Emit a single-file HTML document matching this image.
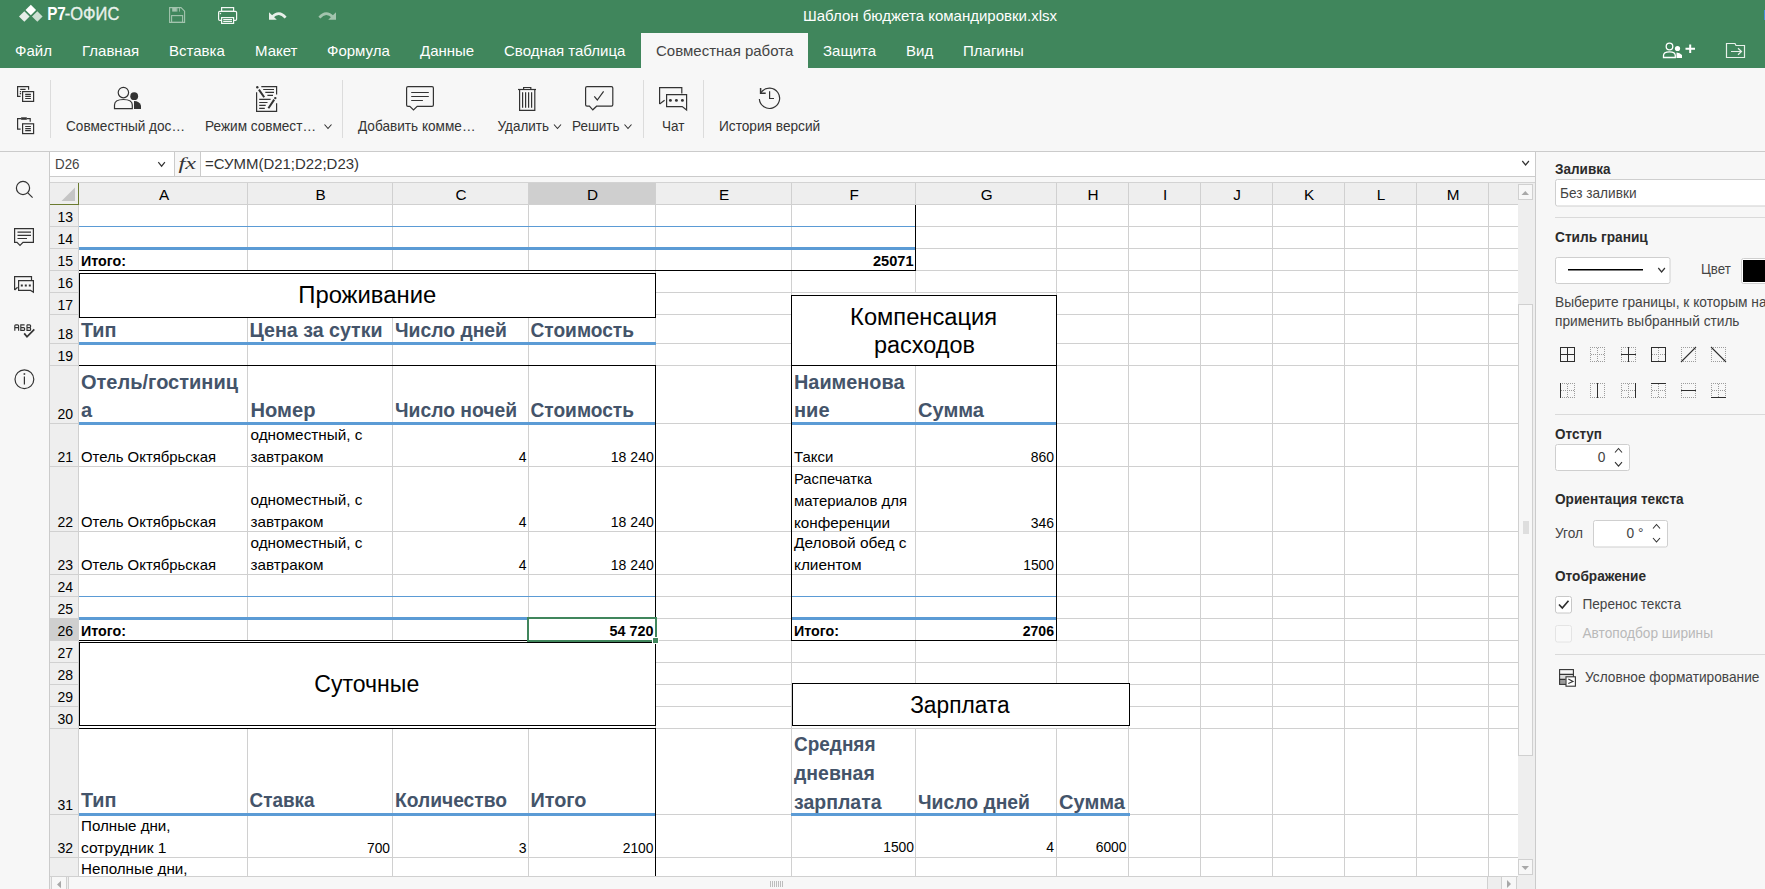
<!DOCTYPE html>
<html><head><meta charset="utf-8"><title>Р7-Офис</title>
<style>
html,body{margin:0;padding:0;width:1765px;height:889px;overflow:hidden;background:#f7f7f7;}
svg{display:block;position:absolute;left:0;top:0;}
text{white-space:pre;}
</style></head>
<body>
<svg width="1765" height="889" viewBox="0 0 1765 889" shape-rendering="auto">
<rect x="0" y="0" width="1765" height="889" fill="#f7f7f7" />
<rect x="0" y="0" width="1765" height="68" fill="#40865c" />
<rect x="1764" y="10" width="1" height="10" fill="#4a8fd8" />
<path d="M30.8 4.7 L36.1 10.0 L30.8 15.3 L25.5 10.0 Z" fill="#ffffff"/>
<path d="M24.3 11.2 L29.6 16.5 L24.3 21.8 L19.0 16.5 Z" fill="#e6eee8"/>
<path d="M37.3 11.2 L42.599999999999994 16.5 L37.3 21.8 L31.999999999999996 16.5 Z" fill="#cddfd3"/>
<text x="47.2" y="20" font-family="Liberation Sans" font-size="17.5" font-weight="700" fill="#ffffff" textLength="18.6" lengthAdjust="spacingAndGlyphs" >Р7</text>
<text x="64.8" y="20" font-family="Liberation Sans" font-size="17.5" fill="#e9f1eb" textLength="54.5" lengthAdjust="spacingAndGlyphs" stroke="#e9f1eb" stroke-width="0.35">-ОФИС</text>
<g fill="none" stroke="#a3c4ae" stroke-width="1.1"><path d="M169.6 7.6 H181 L184.6 11.2 V22.4 H169.6 Z"/><rect x="171.6" y="15.6" width="11" height="6.8"/></g>
<rect x="172.2" y="8" width="4.6" height="3.6" fill="#a3c4ae" />
<rect x="176.8" y="8" width="0.6" height="3.6" fill="#a3c4ae" />
<rect x="179" y="8" width="0.8" height="3.6" fill="#a3c4ae" />
<g fill="none" stroke="#f4f8f5" stroke-width="1.2"><rect x="221.6" y="7.6" width="12" height="3.8"/><path d="M221.6 20.4 H219.8 Q218.6 20.4 218.6 19.2 V12.6 Q218.6 11.4 219.8 11.4 H235.4 Q236.6 11.4 236.6 12.6 V19.2 Q236.6 20.4 235.4 20.4 H233.6"/><rect x="221.6" y="17.6" width="12" height="5.8"/><path d="M223.2 19.6 H232 M223.2 21.5 H232"/></g>
<rect x="219.8" y="12.9" width="1.3" height="1.3" fill="#f4f8f5" />
<path d="M269 12.3 L269 19.8 L276.8 19.8 Z" fill="#e8f0ea"/><path d="M272 17.2 Q279 9.8 285.6 17.6" fill="none" stroke="#e8f0ea" stroke-width="2.6"/>
<path d="M336 12.3 L336 19.8 L328.2 19.8 Z" fill="#a3c4ae"/><path d="M333 17.2 Q326 9.8 319.4 17.6" fill="none" stroke="#a3c4ae" stroke-width="2.6"/>
<text x="803" y="21" font-family="Liberation Sans" font-size="15" fill="#ffffff" textLength="254" lengthAdjust="spacingAndGlyphs" >Шаблон бюджета командировки.xlsx</text>
<rect x="641" y="33" width="167" height="35" fill="#f7f7f7" />
<text x="15" y="56" font-family="Liberation Sans" font-size="15" fill="#ffffff" >Файл</text>
<text x="82" y="56" font-family="Liberation Sans" font-size="15" fill="#ffffff" >Главная</text>
<text x="169" y="56" font-family="Liberation Sans" font-size="15" fill="#ffffff" >Вставка</text>
<text x="255" y="56" font-family="Liberation Sans" font-size="15" fill="#ffffff" >Макет</text>
<text x="327" y="56" font-family="Liberation Sans" font-size="15" fill="#ffffff" >Формула</text>
<text x="420" y="56" font-family="Liberation Sans" font-size="15" fill="#ffffff" >Данные</text>
<text x="504" y="56" font-family="Liberation Sans" font-size="15" fill="#ffffff" >Сводная таблица</text>
<text x="656" y="56" font-family="Liberation Sans" font-size="15" fill="#444444" >Совместная работа</text>
<text x="823" y="56" font-family="Liberation Sans" font-size="15" fill="#ffffff" >Защита</text>
<text x="906" y="56" font-family="Liberation Sans" font-size="15" fill="#ffffff" >Вид</text>
<text x="963" y="56" font-family="Liberation Sans" font-size="15" fill="#ffffff" >Плагины</text>
<g fill="none" stroke="#ffffff" stroke-width="1.3"><circle cx="1669.5" cy="46.5" r="3.3"/><path d="M1663.5 57.5 V55.5 Q1663.5 51.8 1669.5 51.8 Q1675.3 51.8 1675.3 55.5 V57.5 Z"/></g>
<circle cx="1677.5" cy="48.5" r="2.6" fill="#ffffff"/><path d="M1676.5 58 V52.5 Q1680 52.5 1682 55 V58 Z" fill="#ffffff"/><path d="M1685.5 48.7 H1695 M1690.2 44.5 V53" stroke="#ffffff" stroke-width="2"/>
<g fill="none" stroke="#e8f0ea" stroke-width="1.2"><path d="M1726.5 43.5 H1735 L1736 45.5 H1744.5 V57.5 H1726.5 Z"/><path d="M1731 51.5 H1741.5 M1738 48.2 L1741.5 51.5 L1738 54.8"/></g>
<rect x="0" y="151" width="1765" height="1" fill="#cbcbcb" />
<rect x="50" y="80" width="1" height="58" fill="#dcdcdc" />
<rect x="342" y="80" width="1" height="58" fill="#dcdcdc" />
<rect x="643" y="80" width="1" height="58" fill="#dcdcdc" />
<rect x="703" y="80" width="1" height="58" fill="#dcdcdc" />
<g fill="none" stroke="#333333" stroke-width="1.2"><path d="M28.6 89.8 V86.6 H17.6 V96.4 H20.6"/><path d="M20.2 89.4 H25.6"/><rect x="22.6" y="91.6" width="11" height="9.8"/><path d="M25.2 94.3 H30.9 M25.2 96.4 H30.9 M25.2 98.5 H30.9"/><path d="M26.8 118.6 H30.2 V121.8 M21 118.6 H17.6 V129.2 H20.6"/><rect x="22.6" y="123.8" width="11" height="9.8"/><path d="M25.2 126.5 H30.9 M25.2 128.6 H30.9 M25.2 130.6 H30.9"/></g>
<rect x="19.8" y="91" width="1.3" height="1.3" fill="#333333" />
<rect x="19.8" y="93" width="1.3" height="1.3" fill="#333333" />
<rect x="21.1" y="117.3" width="5.7" height="2.5" fill="#333333" />
<g fill="none" stroke="#333333" stroke-width="1.2"><circle cx="123.4" cy="92.6" r="5.2"/><path d="M114.5 108.6 V105 Q114.5 99.5 123.4 99.5 Q132.3 99.5 132.3 105 V108.6 Z"/></g><circle cx="134.2" cy="96.2" r="3.9" fill="#333333"/><path d="M134 109 V100.9 Q139.5 100.9 141 105.5 V109 Z" fill="#333333"/>
<text x="66" y="131" font-family="Liberation Sans" font-size="13.75" fill="#333333" textLength="119" lengthAdjust="spacingAndGlyphs" >Совместный дос…</text>
<g fill="none" stroke="#333333" stroke-width="1.2"><path d="M261.3 86.6 H276.6 V94.4 M276.6 103.2 V111.4 H256.6 V92.3"/><path d="M263.2 89.5 H274 M265.3 92.4 H274 M267.4 95.4 H273 M259.2 99.4 H270.6 M259.2 102.5 H267.5 M259.2 105.4 H265.7 M259.2 108.4 H264.8"/></g><path d="M258.9 89.6 L264.2 97.3 M274.2 99.6 L268.4 108.2" stroke="#333333" stroke-width="2"/><circle cx="257.3" cy="87.3" r="1.2" fill="#333333"/><circle cx="275.3" cy="98.1" r="1.2" fill="#333333"/>
<text x="205" y="131" font-family="Liberation Sans" font-size="13.75" fill="#333333" textLength="111" lengthAdjust="spacingAndGlyphs" >Режим совмест…</text>
<path d="M324.5 124.5 L328.0 128.5 L331.5 124.5" fill="none" stroke="#333333" stroke-width="1.1"/>
<g fill="none" stroke="#333333" stroke-width="1.2"><path d="M406.6 88 Q406.6 86.6 408 86.6 H432 Q433.4 86.6 433.4 88 V105 Q433.4 106.4 432 106.4 H417.2 L413.5 110 L409.8 106.4 H408 Q406.6 106.4 406.6 105 Z"/><path d="M411.2 92.5 H428.8 M411.2 96.5 H428.8 M411.2 100.5 H422.9"/></g>
<text x="358" y="131" font-family="Liberation Sans" font-size="13.75" fill="#333333" textLength="117.5" lengthAdjust="spacingAndGlyphs" >Добавить комме…</text>
<g fill="none" stroke="#333333" stroke-width="1.2"><path d="M518 89.5 H536"/><path d="M523.6 89.5 V87.5 H530.8 V89.5"/><path d="M519.6 89.5 V110.4 H534.8 V89.5"/><path d="M522.6 92.2 V107.8 M525.6 92.2 V107.8 M528.6 92.2 V107.8 M531.6 92.2 V107.8"/></g>
<text x="497.5" y="131" font-family="Liberation Sans" font-size="13.75" fill="#333333" textLength="51.5" lengthAdjust="spacingAndGlyphs" >Удалить</text>
<path d="M554 124.5 L557.5 128.5 L561 124.5" fill="none" stroke="#333333" stroke-width="1.1"/>
<g fill="none" stroke="#333333" stroke-width="1.2"><path d="M585.6 88 Q585.6 86.6 587 86.6 H611.4 Q612.8 86.6 612.8 88 V104.8 Q612.8 106.2 611.4 106.2 H596.6 L592.8 109.8 L589.4 106.2 H587 Q585.6 106.2 585.6 104.8 Z"/><path d="M594.3 96.4 L597.3 100 L603.6 91.3"/></g>
<text x="572" y="131" font-family="Liberation Sans" font-size="13.75" fill="#333333" textLength="47.6" lengthAdjust="spacingAndGlyphs" >Решить</text>
<path d="M624.5 124.5 L628.0 128.5 L631.5 124.5" fill="none" stroke="#333333" stroke-width="1.1"/>
<g fill="none" stroke="#333333" stroke-width="1.2"><path d="M659.6 104 V87.6 H681.8 V93.6"/><path d="M659.6 104 L664.6 100.2"/><path d="M666.6 94.6 H686.6 V110 L682.2 106.6 H666.6 Z"/></g>
<circle cx="670.4" cy="100.4" r="1.45" fill="#333333"/>
<circle cx="676.4" cy="100.4" r="1.45" fill="#333333"/>
<circle cx="682.4" cy="100.4" r="1.45" fill="#333333"/>
<text x="662" y="131" font-family="Liberation Sans" font-size="13.75" fill="#333333" textLength="22.4" lengthAdjust="spacingAndGlyphs" >Чат</text>
<g fill="none" stroke="#333333" stroke-width="1.2"><path d="M759.35 99 A10.15 10.15 0 1 0 761.7 91.75 L760.6 93.2"/><path d="M769.6 91.2 V98.5 H774"/></g><path d="M760.6 88.1 V93.2 H765.7" fill="none" stroke="#333333" stroke-width="1.5"/>
<text x="719" y="131" font-family="Liberation Sans" font-size="13.75" fill="#333333" textLength="101.2" lengthAdjust="spacingAndGlyphs" >История версий</text>
<rect x="49" y="152" width="1" height="737" fill="#cbcbcb" />
<g fill="none" stroke="#333333" stroke-width="1.2"><circle cx="23" cy="188" r="6.6"/><path d="M27.8 192.8 L32.6 197.6"/><path d="M14.6 228.6 H33.4 V242.4 H23 L20 245.4 L17 242.4 H14.6 Z"/><path d="M17.5 232.2 H31 M17.5 235.4 H31 M17.5 238.5 H27"/><path d="M14.6 290 V276.6 H31.5 V280.6 M14.6 290 L17.6 287.2"/><path d="M18.6 280.6 H33.4 V292.2 L30.6 290.4 H18.6 Z"/><circle cx="24.4" cy="379.3" r="9.4"/><path d="M24.4 376.5 V384.5"/></g>
<rect x="20.8" y="284.5" width="2" height="2" fill="#333333" />
<rect x="24.8" y="284.5" width="2" height="2" fill="#333333" />
<rect x="28.8" y="284.5" width="2" height="2" fill="#333333" />
<rect x="23.6" y="373.2" width="1.6" height="1.6" fill="#333333" />
<g fill="none" stroke="#333333" stroke-width="1.15"><path d="M14.8 330.7 V325.8 Q14.8 324.8 15.8 324.8 H17.6 Q18.6 324.8 18.6 325.8 V330.7 M14.8 327.6 H18.6"/><path d="M24.6 324.8 H20.8 V330.4 H23.6 Q24.6 330.4 24.6 329.4 V328.6 Q24.6 327.6 23.6 327.6 H20.8"/><path d="M27 324.8 H29.6 Q30.6 324.8 30.6 325.8 V326.6 Q30.6 327.6 29.6 327.6 H27 M27 324.8 V330.4 H29.6 Q30.6 330.4 30.6 329.4 V328.6 Q30.6 327.6 29.6 327.6"/></g>
<path d="M24.2 333.4 L27 336.8 L34.3 329.4" fill="none" stroke="#333333" stroke-width="1.7"/>
<rect x="50" y="152" width="1485" height="24" fill="#ffffff" />
<rect x="50" y="176" width="1485" height="1" fill="#cbcbcb" />
<rect x="175" y="152" width="25" height="24" fill="#f7f7f7" />
<rect x="174" y="152" width="1" height="24" fill="#cbcbcb" />
<rect x="200" y="152" width="1" height="24" fill="#cbcbcb" />
<text x="55" y="169" font-family="Liberation Sans" font-size="13.75" fill="#444444" textLength="24.5" lengthAdjust="spacingAndGlyphs" >D26</text>
<path d="M158.3 162.2 L161.60000000000002 166.2 L164.9 162.2" fill="none" stroke="#333333" stroke-width="1.2"/>
<text x="178.5" y="168.8" font-family="Liberation Serif" font-size="17" font-style="italic" fill="#333333" textLength="17.5" lengthAdjust="spacingAndGlyphs" >fx</text>
<text x="205" y="169" font-family="Liberation Sans" font-size="15" fill="#333333" textLength="154" lengthAdjust="spacingAndGlyphs" >=СУММ(D21;D22;D23)</text>
<path d="M1522.3 161 L1525.6 165 L1528.8999999999999 161" fill="none" stroke="#333333" stroke-width="1.2"/>
<rect x="50" y="182" width="1485" height="1" fill="#d3d3d3" />
<rect x="50" y="183" width="1468" height="21" fill="#eeeeee" />
<rect x="50" y="205" width="28" height="671" fill="#eeeeee" />
<rect x="79" y="205" width="1439" height="671" fill="#ffffff" />
<rect x="529" y="183" width="126" height="21" fill="#cfcfcf" />
<rect x="50" y="619" width="28" height="21" fill="#cfcfcf" />
<rect x="247" y="183" width="1" height="21" fill="#d0d0d0" />
<rect x="392" y="183" width="1" height="21" fill="#d0d0d0" />
<rect x="528" y="183" width="1" height="21" fill="#d0d0d0" />
<rect x="655" y="183" width="1" height="21" fill="#d0d0d0" />
<rect x="791" y="183" width="1" height="21" fill="#d0d0d0" />
<rect x="915" y="183" width="1" height="21" fill="#d0d0d0" />
<rect x="1056" y="183" width="1" height="21" fill="#d0d0d0" />
<rect x="1128" y="183" width="1" height="21" fill="#d0d0d0" />
<rect x="1200" y="183" width="1" height="21" fill="#d0d0d0" />
<rect x="1272" y="183" width="1" height="21" fill="#d0d0d0" />
<rect x="1344" y="183" width="1" height="21" fill="#d0d0d0" />
<rect x="1416" y="183" width="1" height="21" fill="#d0d0d0" />
<rect x="1488" y="183" width="1" height="21" fill="#d0d0d0" />
<rect x="50" y="204" width="1468" height="1" fill="#d0d0d0" />
<rect x="78" y="205" width="1" height="671" fill="#d0d0d0" />
<rect x="50" y="226" width="28" height="1" fill="#d0d0d0" />
<rect x="50" y="248" width="28" height="1" fill="#d0d0d0" />
<rect x="50" y="270" width="28" height="1" fill="#d0d0d0" />
<rect x="50" y="292" width="28" height="1" fill="#d0d0d0" />
<rect x="50" y="314" width="28" height="1" fill="#d0d0d0" />
<rect x="50" y="343" width="28" height="1" fill="#d0d0d0" />
<rect x="50" y="365" width="28" height="1" fill="#d0d0d0" />
<rect x="50" y="423" width="28" height="1" fill="#d0d0d0" />
<rect x="50" y="466" width="28" height="1" fill="#d0d0d0" />
<rect x="50" y="531" width="28" height="1" fill="#d0d0d0" />
<rect x="50" y="574" width="28" height="1" fill="#d0d0d0" />
<rect x="50" y="596" width="28" height="1" fill="#d0d0d0" />
<rect x="50" y="618" width="28" height="1" fill="#d0d0d0" />
<rect x="50" y="640" width="28" height="1" fill="#d0d0d0" />
<rect x="50" y="662" width="28" height="1" fill="#d0d0d0" />
<rect x="50" y="684" width="28" height="1" fill="#d0d0d0" />
<rect x="50" y="706" width="28" height="1" fill="#d0d0d0" />
<rect x="50" y="728" width="28" height="1" fill="#d0d0d0" />
<rect x="50" y="814" width="28" height="1" fill="#d0d0d0" />
<rect x="50" y="857" width="28" height="1" fill="#d0d0d0" />
<path d="M61.5 201 L75 201 L75 187.5 Z" fill="#c5c5c5"/>
<rect x="50" y="204" width="29" height="1" fill="#6b7b2f" />
<rect x="78" y="183" width="1" height="22" fill="#6b7b2f" />
<text x="164.1" y="200" font-family="Liberation Sans" font-size="15.3" fill="#000" text-anchor="middle" >A</text>
<text x="320.6" y="200" font-family="Liberation Sans" font-size="15.3" fill="#000" text-anchor="middle" >B</text>
<text x="461.1" y="200" font-family="Liberation Sans" font-size="15.3" fill="#000" text-anchor="middle" >C</text>
<text x="592.6" y="200" font-family="Liberation Sans" font-size="15.3" fill="#000" text-anchor="middle" >D</text>
<text x="724.1" y="200" font-family="Liberation Sans" font-size="15.3" fill="#000" text-anchor="middle" >E</text>
<text x="854.1" y="200" font-family="Liberation Sans" font-size="15.3" fill="#000" text-anchor="middle" >F</text>
<text x="986.6" y="200" font-family="Liberation Sans" font-size="15.3" fill="#000" text-anchor="middle" >G</text>
<text x="1093.1" y="200" font-family="Liberation Sans" font-size="15.3" fill="#000" text-anchor="middle" >H</text>
<text x="1165.1" y="200" font-family="Liberation Sans" font-size="15.3" fill="#000" text-anchor="middle" >I</text>
<text x="1237.1" y="200" font-family="Liberation Sans" font-size="15.3" fill="#000" text-anchor="middle" >J</text>
<text x="1309.1" y="200" font-family="Liberation Sans" font-size="15.3" fill="#000" text-anchor="middle" >K</text>
<text x="1381.1" y="200" font-family="Liberation Sans" font-size="15.3" fill="#000" text-anchor="middle" >L</text>
<text x="1453.1" y="200" font-family="Liberation Sans" font-size="15.3" fill="#000" text-anchor="middle" >M</text>
<text x="65.2" y="221.5" font-family="Liberation Sans" font-size="15" fill="#000" text-anchor="middle" textLength="15.6" lengthAdjust="spacingAndGlyphs" >13</text>
<text x="65.2" y="243.5" font-family="Liberation Sans" font-size="15" fill="#000" text-anchor="middle" textLength="15.6" lengthAdjust="spacingAndGlyphs" >14</text>
<text x="65.2" y="265.5" font-family="Liberation Sans" font-size="15" fill="#000" text-anchor="middle" textLength="15.6" lengthAdjust="spacingAndGlyphs" >15</text>
<text x="65.2" y="287.5" font-family="Liberation Sans" font-size="15" fill="#000" text-anchor="middle" textLength="15.6" lengthAdjust="spacingAndGlyphs" >16</text>
<text x="65.2" y="309.5" font-family="Liberation Sans" font-size="15" fill="#000" text-anchor="middle" textLength="15.6" lengthAdjust="spacingAndGlyphs" >17</text>
<text x="65.2" y="338.5" font-family="Liberation Sans" font-size="15" fill="#000" text-anchor="middle" textLength="15.6" lengthAdjust="spacingAndGlyphs" >18</text>
<text x="65.2" y="360.5" font-family="Liberation Sans" font-size="15" fill="#000" text-anchor="middle" textLength="15.6" lengthAdjust="spacingAndGlyphs" >19</text>
<text x="65.2" y="418.5" font-family="Liberation Sans" font-size="15" fill="#000" text-anchor="middle" textLength="15.6" lengthAdjust="spacingAndGlyphs" >20</text>
<text x="65.2" y="461.5" font-family="Liberation Sans" font-size="15" fill="#000" text-anchor="middle" textLength="15.6" lengthAdjust="spacingAndGlyphs" >21</text>
<text x="65.2" y="526.5" font-family="Liberation Sans" font-size="15" fill="#000" text-anchor="middle" textLength="15.6" lengthAdjust="spacingAndGlyphs" >22</text>
<text x="65.2" y="569.5" font-family="Liberation Sans" font-size="15" fill="#000" text-anchor="middle" textLength="15.6" lengthAdjust="spacingAndGlyphs" >23</text>
<text x="65.2" y="591.5" font-family="Liberation Sans" font-size="15" fill="#000" text-anchor="middle" textLength="15.6" lengthAdjust="spacingAndGlyphs" >24</text>
<text x="65.2" y="613.5" font-family="Liberation Sans" font-size="15" fill="#000" text-anchor="middle" textLength="15.6" lengthAdjust="spacingAndGlyphs" >25</text>
<text x="65.2" y="635.5" font-family="Liberation Sans" font-size="15" fill="#000" text-anchor="middle" textLength="15.6" lengthAdjust="spacingAndGlyphs" >26</text>
<text x="65.2" y="657.5" font-family="Liberation Sans" font-size="15" fill="#000" text-anchor="middle" textLength="15.6" lengthAdjust="spacingAndGlyphs" >27</text>
<text x="65.2" y="679.5" font-family="Liberation Sans" font-size="15" fill="#000" text-anchor="middle" textLength="15.6" lengthAdjust="spacingAndGlyphs" >28</text>
<text x="65.2" y="701.5" font-family="Liberation Sans" font-size="15" fill="#000" text-anchor="middle" textLength="15.6" lengthAdjust="spacingAndGlyphs" >29</text>
<text x="65.2" y="723.5" font-family="Liberation Sans" font-size="15" fill="#000" text-anchor="middle" textLength="15.6" lengthAdjust="spacingAndGlyphs" >30</text>
<text x="65.2" y="809.5" font-family="Liberation Sans" font-size="15" fill="#000" text-anchor="middle" textLength="15.6" lengthAdjust="spacingAndGlyphs" >31</text>
<text x="65.2" y="852.5" font-family="Liberation Sans" font-size="15" fill="#000" text-anchor="middle" textLength="15.6" lengthAdjust="spacingAndGlyphs" >32</text>
<rect x="247" y="205" width="1" height="671" fill="#d0d0d0" />
<rect x="392" y="205" width="1" height="671" fill="#d0d0d0" />
<rect x="528" y="205" width="1" height="671" fill="#d0d0d0" />
<rect x="655" y="205" width="1" height="671" fill="#d0d0d0" />
<rect x="791" y="205" width="1" height="671" fill="#d0d0d0" />
<rect x="915" y="205" width="1" height="671" fill="#d0d0d0" />
<rect x="1056" y="205" width="1" height="671" fill="#d0d0d0" />
<rect x="1128" y="205" width="1" height="671" fill="#d0d0d0" />
<rect x="1200" y="205" width="1" height="671" fill="#d0d0d0" />
<rect x="1272" y="205" width="1" height="671" fill="#d0d0d0" />
<rect x="1344" y="205" width="1" height="671" fill="#d0d0d0" />
<rect x="1416" y="205" width="1" height="671" fill="#d0d0d0" />
<rect x="1488" y="205" width="1" height="671" fill="#d0d0d0" />
<rect x="79" y="226" width="1439" height="1" fill="#d0d0d0" />
<rect x="79" y="248" width="1439" height="1" fill="#d0d0d0" />
<rect x="79" y="270" width="1439" height="1" fill="#d0d0d0" />
<rect x="79" y="292" width="1439" height="1" fill="#d0d0d0" />
<rect x="79" y="314" width="1439" height="1" fill="#d0d0d0" />
<rect x="79" y="343" width="1439" height="1" fill="#d0d0d0" />
<rect x="79" y="365" width="1439" height="1" fill="#d0d0d0" />
<rect x="79" y="423" width="1439" height="1" fill="#d0d0d0" />
<rect x="79" y="466" width="1439" height="1" fill="#d0d0d0" />
<rect x="79" y="531" width="1439" height="1" fill="#d0d0d0" />
<rect x="79" y="574" width="1439" height="1" fill="#d0d0d0" />
<rect x="79" y="596" width="1439" height="1" fill="#d0d0d0" />
<rect x="79" y="618" width="1439" height="1" fill="#d0d0d0" />
<rect x="79" y="640" width="1439" height="1" fill="#d0d0d0" />
<rect x="79" y="662" width="1439" height="1" fill="#d0d0d0" />
<rect x="79" y="684" width="1439" height="1" fill="#d0d0d0" />
<rect x="79" y="706" width="1439" height="1" fill="#d0d0d0" />
<rect x="79" y="728" width="1439" height="1" fill="#d0d0d0" />
<rect x="79" y="814" width="1439" height="1" fill="#d0d0d0" />
<rect x="79" y="857" width="1439" height="1" fill="#d0d0d0" />
<rect x="79" y="271" width="576" height="43" fill="#fff" />
<rect x="79" y="641" width="576" height="87" fill="#fff" />
<rect x="792" y="293" width="264" height="72" fill="#fff" />
<rect x="792" y="685" width="336" height="43" fill="#fff" />
<rect x="79" y="226" width="837" height="1" fill="#5b9bd5" />
<rect x="79" y="247" width="837" height="3" fill="#5b9bd5" />
<rect x="79" y="342" width="577" height="3" fill="#5b9bd5" />
<rect x="79" y="422" width="577" height="3" fill="#5b9bd5" />
<rect x="791" y="422" width="266" height="3" fill="#5b9bd5" />
<rect x="79" y="596" width="577" height="1" fill="#5b9bd5" />
<rect x="791" y="596" width="266" height="1" fill="#5b9bd5" />
<rect x="79" y="617" width="577" height="3" fill="#5b9bd5" />
<rect x="791" y="617" width="266" height="3" fill="#5b9bd5" />
<rect x="79" y="813" width="577" height="3" fill="#5b9bd5" />
<rect x="791" y="813" width="339" height="3" fill="#5b9bd5" />
<rect x="79" y="270" width="837" height="1" fill="#000000" />
<rect x="915" y="205" width="1" height="66" fill="#000000" />
<rect x="79" y="273" width="577" height="45" fill="#fff" />
<rect x="79" y="273" width="577" height="1" fill="#000000" />
<rect x="79" y="317" width="577" height="1" fill="#000000" />
<rect x="79" y="273" width="1" height="45" fill="#000000" />
<rect x="655" y="273" width="1" height="45" fill="#000000" />
<rect x="79" y="365" width="577" height="1" fill="#000000" />
<rect x="655" y="365" width="1" height="276" fill="#000000" />
<rect x="79" y="640" width="577" height="1" fill="#000000" />
<rect x="79" y="642" width="577" height="84" fill="#fff" />
<rect x="79" y="642" width="577" height="1" fill="#000000" />
<rect x="79" y="725" width="577" height="1" fill="#000000" />
<rect x="79" y="642" width="1" height="84" fill="#000000" />
<rect x="655" y="642" width="1" height="84" fill="#000000" />
<rect x="79" y="728" width="577" height="1" fill="#000000" />
<rect x="655" y="728" width="1" height="148" fill="#000000" />
<rect x="791" y="295" width="266" height="71" fill="#fff" />
<rect x="791" y="295" width="266" height="1" fill="#000000" />
<rect x="791" y="365" width="266" height="1" fill="#000000" />
<rect x="791" y="295" width="1" height="71" fill="#000000" />
<rect x="1056" y="295" width="1" height="71" fill="#000000" />
<rect x="791" y="365" width="1" height="276" fill="#000000" />
<rect x="1056" y="365" width="1" height="276" fill="#000000" />
<rect x="791" y="640" width="266" height="1" fill="#000000" />
<rect x="792" y="683" width="338" height="43" fill="#fff" />
<rect x="792" y="683" width="338" height="1" fill="#000000" />
<rect x="792" y="725" width="338" height="1" fill="#000000" />
<rect x="792" y="683" width="1" height="43" fill="#000000" />
<rect x="1129" y="683" width="1" height="43" fill="#000000" />
<text x="81" y="266" font-family="Liberation Sans" font-size="15" font-weight="700" fill="#000" textLength="45" lengthAdjust="spacingAndGlyphs" >Итого:</text>
<text x="913.5" y="266" font-family="Liberation Sans" font-size="15" font-weight="700" fill="#000" text-anchor="end" textLength="40.5" lengthAdjust="spacingAndGlyphs" >25071</text>
<text x="367.25" y="303" font-family="Liberation Sans" font-size="23.5" fill="#000" text-anchor="middle" textLength="138" lengthAdjust="spacingAndGlyphs" >Проживание</text>
<text x="81" y="337" font-family="Liberation Sans" font-size="20" font-weight="700" fill="#44546a" textLength="35.5" lengthAdjust="spacingAndGlyphs" >Тип</text>
<text x="249.5" y="337" font-family="Liberation Sans" font-size="20" font-weight="700" fill="#44546a" textLength="133" lengthAdjust="spacingAndGlyphs" >Цена за сутки</text>
<text x="395" y="337" font-family="Liberation Sans" font-size="20" font-weight="700" fill="#44546a" textLength="112" lengthAdjust="spacingAndGlyphs" >Число дней</text>
<text x="530.5" y="337" font-family="Liberation Sans" font-size="20" font-weight="700" fill="#44546a" textLength="103.5" lengthAdjust="spacingAndGlyphs" >Стоимость</text>
<text x="81" y="389" font-family="Liberation Sans" font-size="20" font-weight="700" fill="#44546a" textLength="157" lengthAdjust="spacingAndGlyphs" >Отель/гостиниц</text>
<text x="81" y="417" font-family="Liberation Sans" font-size="20" font-weight="700" fill="#44546a" >а</text>
<text x="250.5" y="417" font-family="Liberation Sans" font-size="20" font-weight="700" fill="#44546a" textLength="65" lengthAdjust="spacingAndGlyphs" >Номер</text>
<text x="395" y="417" font-family="Liberation Sans" font-size="20" font-weight="700" fill="#44546a" textLength="122" lengthAdjust="spacingAndGlyphs" >Число ночей</text>
<text x="530.5" y="417" font-family="Liberation Sans" font-size="20" font-weight="700" fill="#44546a" textLength="103.5" lengthAdjust="spacingAndGlyphs" >Стоимость</text>
<text x="81" y="461.5" font-family="Liberation Sans" font-size="15" fill="#000" textLength="135" lengthAdjust="spacingAndGlyphs" >Отель Октябрьская</text>
<text x="250.5" y="439.5" font-family="Liberation Sans" font-size="15" fill="#000" textLength="112" lengthAdjust="spacingAndGlyphs" >одноместный, с</text>
<text x="250.5" y="461.5" font-family="Liberation Sans" font-size="15" fill="#000" textLength="73" lengthAdjust="spacingAndGlyphs" >завтраком</text>
<text x="526.5" y="461.5" font-family="Liberation Sans" font-size="15" fill="#000" text-anchor="end" textLength="7.8" lengthAdjust="spacingAndGlyphs" >4</text>
<text x="653.8" y="461.5" font-family="Liberation Sans" font-size="15" fill="#000" text-anchor="end" textLength="43" lengthAdjust="spacingAndGlyphs" >18 240</text>
<text x="81" y="527" font-family="Liberation Sans" font-size="15" fill="#000" textLength="135" lengthAdjust="spacingAndGlyphs" >Отель Октябрьская</text>
<text x="250.5" y="505" font-family="Liberation Sans" font-size="15" fill="#000" textLength="112" lengthAdjust="spacingAndGlyphs" >одноместный, с</text>
<text x="250.5" y="527" font-family="Liberation Sans" font-size="15" fill="#000" textLength="73" lengthAdjust="spacingAndGlyphs" >завтраком</text>
<text x="526.5" y="527" font-family="Liberation Sans" font-size="15" fill="#000" text-anchor="end" textLength="7.8" lengthAdjust="spacingAndGlyphs" >4</text>
<text x="653.8" y="527" font-family="Liberation Sans" font-size="15" fill="#000" text-anchor="end" textLength="43" lengthAdjust="spacingAndGlyphs" >18 240</text>
<text x="81" y="569.5" font-family="Liberation Sans" font-size="15" fill="#000" textLength="135" lengthAdjust="spacingAndGlyphs" >Отель Октябрьская</text>
<text x="250.5" y="547.5" font-family="Liberation Sans" font-size="15" fill="#000" textLength="112" lengthAdjust="spacingAndGlyphs" >одноместный, с</text>
<text x="250.5" y="569.5" font-family="Liberation Sans" font-size="15" fill="#000" textLength="73" lengthAdjust="spacingAndGlyphs" >завтраком</text>
<text x="526.5" y="569.5" font-family="Liberation Sans" font-size="15" fill="#000" text-anchor="end" textLength="7.8" lengthAdjust="spacingAndGlyphs" >4</text>
<text x="653.8" y="569.5" font-family="Liberation Sans" font-size="15" fill="#000" text-anchor="end" textLength="43" lengthAdjust="spacingAndGlyphs" >18 240</text>
<text x="81" y="635.5" font-family="Liberation Sans" font-size="15" font-weight="700" fill="#000" textLength="45" lengthAdjust="spacingAndGlyphs" >Итого:</text>
<text x="653.5" y="635.5" font-family="Liberation Sans" font-size="15" font-weight="700" fill="#000" text-anchor="end" textLength="44" lengthAdjust="spacingAndGlyphs" >54 720</text>
<text x="366.75" y="691.5" font-family="Liberation Sans" font-size="23.5" fill="#000" text-anchor="middle" textLength="105" lengthAdjust="spacingAndGlyphs" >Суточные</text>
<text x="81" y="807" font-family="Liberation Sans" font-size="20" font-weight="700" fill="#44546a" textLength="35.5" lengthAdjust="spacingAndGlyphs" >Тип</text>
<text x="249.5" y="807" font-family="Liberation Sans" font-size="20" font-weight="700" fill="#44546a" textLength="65" lengthAdjust="spacingAndGlyphs" >Ставка</text>
<text x="395" y="807" font-family="Liberation Sans" font-size="20" font-weight="700" fill="#44546a" textLength="112" lengthAdjust="spacingAndGlyphs" >Количество</text>
<text x="530.5" y="807" font-family="Liberation Sans" font-size="20" font-weight="700" fill="#44546a" textLength="56" lengthAdjust="spacingAndGlyphs" >Итого</text>
<text x="81" y="831" font-family="Liberation Sans" font-size="15" fill="#000" textLength="89.5" lengthAdjust="spacingAndGlyphs" >Полные дни,</text>
<text x="81" y="852.5" font-family="Liberation Sans" font-size="15" fill="#000" textLength="85.5" lengthAdjust="spacingAndGlyphs" >сотрудник 1</text>
<text x="390" y="852.5" font-family="Liberation Sans" font-size="15" fill="#000" text-anchor="end" textLength="23" lengthAdjust="spacingAndGlyphs" >700</text>
<text x="526.5" y="852.5" font-family="Liberation Sans" font-size="15" fill="#000" text-anchor="end" textLength="7.8" lengthAdjust="spacingAndGlyphs" >3</text>
<text x="653.5" y="852.5" font-family="Liberation Sans" font-size="15" fill="#000" text-anchor="end" textLength="30.8" lengthAdjust="spacingAndGlyphs" >2100</text>
<text x="81" y="873.5" font-family="Liberation Sans" font-size="15" fill="#000" textLength="106.5" lengthAdjust="spacingAndGlyphs" >Неполные дни,</text>
<text x="923.6" y="325" font-family="Liberation Sans" font-size="23.5" fill="#000" text-anchor="middle" textLength="147" lengthAdjust="spacingAndGlyphs" >Компенсация</text>
<text x="924.4" y="352.5" font-family="Liberation Sans" font-size="23.5" fill="#000" text-anchor="middle" textLength="101" lengthAdjust="spacingAndGlyphs" >расходов</text>
<text x="794" y="388.5" font-family="Liberation Sans" font-size="20" font-weight="700" fill="#44546a" textLength="110.5" lengthAdjust="spacingAndGlyphs" >Наименова</text>
<text x="794" y="417.3" font-family="Liberation Sans" font-size="20" font-weight="700" fill="#44546a" >ние</text>
<text x="918" y="417.3" font-family="Liberation Sans" font-size="20" font-weight="700" fill="#44546a" textLength="66" lengthAdjust="spacingAndGlyphs" >Сумма</text>
<text x="794" y="461.5" font-family="Liberation Sans" font-size="15" fill="#000" textLength="39.3" lengthAdjust="spacingAndGlyphs" >Такси</text>
<text x="1054" y="461.5" font-family="Liberation Sans" font-size="15" fill="#000" text-anchor="end" textLength="23.3" lengthAdjust="spacingAndGlyphs" >860</text>
<text x="794" y="483.5" font-family="Liberation Sans" font-size="15" fill="#000" textLength="78" lengthAdjust="spacingAndGlyphs" >Распечатка</text>
<text x="794" y="505.5" font-family="Liberation Sans" font-size="15" fill="#000" textLength="113" lengthAdjust="spacingAndGlyphs" >материалов для</text>
<text x="794" y="528" font-family="Liberation Sans" font-size="15" fill="#000" textLength="96" lengthAdjust="spacingAndGlyphs" >конференции</text>
<text x="1054" y="528" font-family="Liberation Sans" font-size="15" fill="#000" text-anchor="end" textLength="23.3" lengthAdjust="spacingAndGlyphs" >346</text>
<text x="794" y="548" font-family="Liberation Sans" font-size="15" fill="#000" textLength="112.5" lengthAdjust="spacingAndGlyphs" >Деловой обед с</text>
<text x="794" y="569.5" font-family="Liberation Sans" font-size="15" fill="#000" textLength="67.5" lengthAdjust="spacingAndGlyphs" >клиентом</text>
<text x="1054" y="569.5" font-family="Liberation Sans" font-size="15" fill="#000" text-anchor="end" textLength="30.8" lengthAdjust="spacingAndGlyphs" >1500</text>
<text x="794" y="635.5" font-family="Liberation Sans" font-size="15" font-weight="700" fill="#000" textLength="45" lengthAdjust="spacingAndGlyphs" >Итого:</text>
<text x="1054" y="635.5" font-family="Liberation Sans" font-size="15" font-weight="700" fill="#000" text-anchor="end" textLength="31.3" lengthAdjust="spacingAndGlyphs" >2706</text>
<text x="959.9" y="713" font-family="Liberation Sans" font-size="23.5" fill="#000" text-anchor="middle" textLength="99.5" lengthAdjust="spacingAndGlyphs" >Зарплата</text>
<text x="794" y="750.6" font-family="Liberation Sans" font-size="20" font-weight="700" fill="#44546a" textLength="81.5" lengthAdjust="spacingAndGlyphs" >Средняя</text>
<text x="794" y="779.6" font-family="Liberation Sans" font-size="20" font-weight="700" fill="#44546a" textLength="80.8" lengthAdjust="spacingAndGlyphs" >дневная</text>
<text x="794" y="808.6" font-family="Liberation Sans" font-size="20" font-weight="700" fill="#44546a" textLength="87.5" lengthAdjust="spacingAndGlyphs" >зарплата</text>
<text x="918" y="808.6" font-family="Liberation Sans" font-size="20" font-weight="700" fill="#44546a" textLength="112" lengthAdjust="spacingAndGlyphs" >Число дней</text>
<text x="1059" y="808.6" font-family="Liberation Sans" font-size="20" font-weight="700" fill="#44546a" textLength="66" lengthAdjust="spacingAndGlyphs" >Сумма</text>
<text x="914" y="852" font-family="Liberation Sans" font-size="15" fill="#000" text-anchor="end" textLength="30.8" lengthAdjust="spacingAndGlyphs" >1500</text>
<text x="1054" y="852" font-family="Liberation Sans" font-size="15" fill="#000" text-anchor="end" textLength="7.8" lengthAdjust="spacingAndGlyphs" >4</text>
<text x="1126.5" y="852" font-family="Liberation Sans" font-size="15" fill="#000" text-anchor="end" textLength="30.8" lengthAdjust="spacingAndGlyphs" >6000</text>
<rect x="529" y="619" width="126" height="1" fill="#ffffff" />
<rect x="527" y="617" width="130" height="2" fill="#40865c" />
<rect x="527" y="640" width="126" height="2" fill="#40865c" />
<rect x="527" y="617" width="2" height="25" fill="#40865c" />
<rect x="655" y="617" width="2" height="20" fill="#40865c" />
<rect x="652" y="637" width="7" height="7" fill="#ffffff" />
<rect x="653" y="638" width="5" height="5" fill="#40865c" />
<rect x="1518" y="183" width="17" height="693" fill="#eeeeee" />
<rect x="1518" y="183" width="17" height="706" fill="#eeeeee" />
<rect x="1518" y="184" width="15" height="16" fill="#f7f7f7" />
<rect x="1518" y="184" width="15" height="1" fill="#d0d0d0" />
<rect x="1518" y="199" width="15" height="1" fill="#d0d0d0" />
<rect x="1518" y="184" width="1" height="16" fill="#d0d0d0" />
<rect x="1532" y="184" width="1" height="16" fill="#d0d0d0" />
<path d="M1521.5 195 L1525.3 191 L1529 195 Z" fill="#a8a8a8"/>
<rect x="1518" y="304" width="15" height="452" fill="#f7f7f7" />
<rect x="1518" y="304" width="15" height="1" fill="#d0d0d0" />
<rect x="1518" y="755" width="15" height="1" fill="#d0d0d0" />
<rect x="1518" y="304" width="1" height="452" fill="#d0d0d0" />
<rect x="1532" y="304" width="1" height="452" fill="#d0d0d0" />
<rect x="1523" y="521" width="6" height="13" fill="#dedede" />
<rect x="1518" y="859" width="15" height="16" fill="#f7f7f7" />
<rect x="1518" y="859" width="15" height="1" fill="#d0d0d0" />
<rect x="1518" y="874" width="15" height="1" fill="#d0d0d0" />
<rect x="1518" y="859" width="1" height="16" fill="#d0d0d0" />
<rect x="1532" y="859" width="1" height="16" fill="#d0d0d0" />
<path d="M1521.5 866 L1525.3 870 L1529 866 Z" fill="#a8a8a8"/>
<rect x="50" y="876" width="1468" height="13" fill="#eeeeee" />
<rect x="50" y="876" width="1468" height="1" fill="#d0d0d0" />
<rect x="51" y="876" width="16" height="14" fill="#f7f7f7" />
<rect x="51" y="876" width="16" height="1" fill="#d0d0d0" />
<rect x="51" y="889" width="16" height="1" fill="#d0d0d0" />
<rect x="51" y="876" width="1" height="14" fill="#d0d0d0" />
<rect x="66" y="876" width="1" height="14" fill="#d0d0d0" />
<path d="M61 880.8 L57 884.5 L61 888.2 Z" fill="#a8a8a8"/>
<rect x="68" y="876" width="1420" height="14" fill="#f7f7f7" />
<rect x="68" y="876" width="1420" height="1" fill="#d0d0d0" />
<rect x="68" y="889" width="1420" height="1" fill="#d0d0d0" />
<rect x="68" y="876" width="1" height="14" fill="#d0d0d0" />
<rect x="1487" y="876" width="1" height="14" fill="#d0d0d0" />
<rect x="770" y="881" width="1" height="6" fill="#bdbdbd" />
<rect x="772" y="881" width="1" height="6" fill="#bdbdbd" />
<rect x="774" y="881" width="1" height="6" fill="#bdbdbd" />
<rect x="776" y="881" width="1" height="6" fill="#bdbdbd" />
<rect x="778" y="881" width="1" height="6" fill="#bdbdbd" />
<rect x="780" y="881" width="1" height="6" fill="#bdbdbd" />
<rect x="782" y="881" width="1" height="6" fill="#bdbdbd" />
<rect x="1501" y="876" width="16" height="14" fill="#f7f7f7" />
<rect x="1501" y="876" width="16" height="1" fill="#d0d0d0" />
<rect x="1501" y="889" width="16" height="1" fill="#d0d0d0" />
<rect x="1501" y="876" width="1" height="14" fill="#d0d0d0" />
<rect x="1516" y="876" width="1" height="14" fill="#d0d0d0" />
<path d="M1507 880 L1511 884 L1507 888 Z" fill="#a8a8a8"/>
<rect x="1535" y="152" width="1" height="737" fill="#cbcbcb" />
<rect x="1536" y="152" width="229" height="737" fill="#f7f7f7" />
<text x="1555" y="174" font-family="Liberation Sans" font-size="13.75" font-weight="700" fill="#2b2b2b" textLength="55.5" lengthAdjust="spacingAndGlyphs" >Заливка</text>
<rect x="1555.5" y="179.5" width="230" height="26.5" rx="2" fill="#fff" stroke="#cfcfcf"/>
<text x="1560" y="198" font-family="Liberation Sans" font-size="13.75" fill="#444444" textLength="76.5" lengthAdjust="spacingAndGlyphs" >Без заливки</text>
<rect x="1555" y="217" width="210" height="1" fill="#dadada" />
<text x="1555" y="241.5" font-family="Liberation Sans" font-size="13.75" font-weight="700" fill="#2b2b2b" textLength="92.8" lengthAdjust="spacingAndGlyphs" >Стиль границ</text>
<rect x="1555.5" y="257.5" width="114.5" height="26" rx="2" fill="#fff" stroke="#cfcfcf"/>
<rect x="1568" y="269" width="75" height="1.5" fill="#000" />
<path d="M1658.3 268 L1661.6 272 L1664.8999999999999 268" fill="none" stroke="#333333" stroke-width="1.2"/>
<text x="1701" y="274" font-family="Liberation Sans" font-size="13.75" fill="#444444" textLength="29.8" lengthAdjust="spacingAndGlyphs" >Цвет</text>
<rect x="1741.5" y="258.5" width="30" height="25" rx="2" fill="#fff" stroke="#cfcfcf"/>
<rect x="1743" y="260" width="25" height="22" fill="#000" />
<text x="1555" y="306.5" font-family="Liberation Sans" font-size="13.75" fill="#444444" >Выберите границы, к которым на</text>
<text x="1555" y="326" font-family="Liberation Sans" font-size="13.75" fill="#444444" textLength="184.5" lengthAdjust="spacingAndGlyphs" >применить выбранный стиль</text>
<rect x="1560" y="347" width="15" height="1" fill="#2e2e2e" />
<rect x="1560" y="361" width="15" height="1" fill="#2e2e2e" />
<rect x="1560" y="347" width="1" height="15" fill="#2e2e2e" />
<rect x="1574" y="347" width="1" height="15" fill="#2e2e2e" />
<rect x="1567" y="347" width="1" height="15" fill="#2e2e2e" />
<rect x="1560" y="354" width="15" height="1" fill="#2e2e2e" />
<path d="M1590 347h1v1h-1z M1590 349h1v1h-1z M1590 351h1v1h-1z M1590 353h1v1h-1z M1590 355h1v1h-1z M1590 357h1v1h-1z M1590 359h1v1h-1z M1590 361h1v1h-1z M1591 354h1v1h-1z M1592 347h1v1h-1z M1592 361h1v1h-1z M1593 354h1v1h-1z M1594 347h1v1h-1z M1594 361h1v1h-1z M1595 354h1v1h-1z M1596 347h1v1h-1z M1596 361h1v1h-1z M1597 348h1v1h-1z M1597 350h1v1h-1z M1597 352h1v1h-1z M1597 354h1v1h-1z M1597 356h1v1h-1z M1597 358h1v1h-1z M1597 360h1v1h-1z M1598 347h1v1h-1z M1598 361h1v1h-1z M1599 354h1v1h-1z M1600 347h1v1h-1z M1600 361h1v1h-1z M1601 354h1v1h-1z M1602 347h1v1h-1z M1602 361h1v1h-1z M1603 354h1v1h-1z M1604 347h1v1h-1z M1604 349h1v1h-1z M1604 351h1v1h-1z M1604 353h1v1h-1z M1604 355h1v1h-1z M1604 357h1v1h-1z M1604 359h1v1h-1z M1604 361h1v1h-1z" fill="#9c9c9c"/>
<path d="M1621 347h1v1h-1z M1621 349h1v1h-1z M1621 351h1v1h-1z M1621 353h1v1h-1z M1621 355h1v1h-1z M1621 357h1v1h-1z M1621 359h1v1h-1z M1621 361h1v1h-1z M1623 347h1v1h-1z M1623 361h1v1h-1z M1625 347h1v1h-1z M1625 361h1v1h-1z M1627 347h1v1h-1z M1627 361h1v1h-1z M1629 347h1v1h-1z M1629 361h1v1h-1z M1631 347h1v1h-1z M1631 361h1v1h-1z M1633 347h1v1h-1z M1633 361h1v1h-1z M1635 347h1v1h-1z M1635 349h1v1h-1z M1635 351h1v1h-1z M1635 353h1v1h-1z M1635 355h1v1h-1z M1635 357h1v1h-1z M1635 359h1v1h-1z M1635 361h1v1h-1z" fill="#9c9c9c"/>
<rect x="1628" y="347" width="1" height="15" fill="#2e2e2e" />
<rect x="1621" y="354" width="15" height="1" fill="#2e2e2e" />
<path d="M1651 347h1v1h-1z M1651 349h1v1h-1z M1651 351h1v1h-1z M1651 353h1v1h-1z M1651 355h1v1h-1z M1651 357h1v1h-1z M1651 359h1v1h-1z M1651 361h1v1h-1z M1652 354h1v1h-1z M1653 347h1v1h-1z M1653 361h1v1h-1z M1654 354h1v1h-1z M1655 347h1v1h-1z M1655 361h1v1h-1z M1656 354h1v1h-1z M1657 347h1v1h-1z M1657 361h1v1h-1z M1658 348h1v1h-1z M1658 350h1v1h-1z M1658 352h1v1h-1z M1658 354h1v1h-1z M1658 356h1v1h-1z M1658 358h1v1h-1z M1658 360h1v1h-1z M1659 347h1v1h-1z M1659 361h1v1h-1z M1660 354h1v1h-1z M1661 347h1v1h-1z M1661 361h1v1h-1z M1662 354h1v1h-1z M1663 347h1v1h-1z M1663 361h1v1h-1z M1664 354h1v1h-1z M1665 347h1v1h-1z M1665 349h1v1h-1z M1665 351h1v1h-1z M1665 353h1v1h-1z M1665 355h1v1h-1z M1665 357h1v1h-1z M1665 359h1v1h-1z M1665 361h1v1h-1z" fill="#9c9c9c"/>
<rect x="1651" y="347" width="15" height="1" fill="#2e2e2e" />
<rect x="1651" y="361" width="15" height="1" fill="#2e2e2e" />
<rect x="1651" y="347" width="1" height="15" fill="#2e2e2e" />
<rect x="1665" y="347" width="1" height="15" fill="#2e2e2e" />
<path d="M1681 347h1v1h-1z M1681 349h1v1h-1z M1681 351h1v1h-1z M1681 353h1v1h-1z M1681 355h1v1h-1z M1681 357h1v1h-1z M1681 359h1v1h-1z M1681 361h1v1h-1z M1683 347h1v1h-1z M1683 361h1v1h-1z M1685 347h1v1h-1z M1685 361h1v1h-1z M1687 347h1v1h-1z M1687 361h1v1h-1z M1689 347h1v1h-1z M1689 361h1v1h-1z M1691 347h1v1h-1z M1691 361h1v1h-1z M1693 347h1v1h-1z M1693 361h1v1h-1z M1695 347h1v1h-1z M1695 349h1v1h-1z M1695 351h1v1h-1z M1695 353h1v1h-1z M1695 355h1v1h-1z M1695 357h1v1h-1z M1695 359h1v1h-1z M1695 361h1v1h-1z" fill="#9c9c9c"/>
<path d="M1681 362 L1696 347" fill="none" stroke="#2e2e2e" stroke-width="1.1"/>
<path d="M1711 347h1v1h-1z M1711 349h1v1h-1z M1711 351h1v1h-1z M1711 353h1v1h-1z M1711 355h1v1h-1z M1711 357h1v1h-1z M1711 359h1v1h-1z M1711 361h1v1h-1z M1713 347h1v1h-1z M1713 361h1v1h-1z M1715 347h1v1h-1z M1715 361h1v1h-1z M1717 347h1v1h-1z M1717 361h1v1h-1z M1719 347h1v1h-1z M1719 361h1v1h-1z M1721 347h1v1h-1z M1721 361h1v1h-1z M1723 347h1v1h-1z M1723 361h1v1h-1z M1725 347h1v1h-1z M1725 349h1v1h-1z M1725 351h1v1h-1z M1725 353h1v1h-1z M1725 355h1v1h-1z M1725 357h1v1h-1z M1725 359h1v1h-1z M1725 361h1v1h-1z" fill="#9c9c9c"/>
<path d="M1711 347 L1726 362" fill="none" stroke="#2e2e2e" stroke-width="1.1"/>
<path d="M1560 383h1v1h-1z M1560 385h1v1h-1z M1560 387h1v1h-1z M1560 389h1v1h-1z M1560 391h1v1h-1z M1560 393h1v1h-1z M1560 395h1v1h-1z M1560 397h1v1h-1z M1561 390h1v1h-1z M1562 383h1v1h-1z M1562 397h1v1h-1z M1563 390h1v1h-1z M1564 383h1v1h-1z M1564 397h1v1h-1z M1565 390h1v1h-1z M1566 383h1v1h-1z M1566 397h1v1h-1z M1567 384h1v1h-1z M1567 386h1v1h-1z M1567 388h1v1h-1z M1567 390h1v1h-1z M1567 392h1v1h-1z M1567 394h1v1h-1z M1567 396h1v1h-1z M1568 383h1v1h-1z M1568 397h1v1h-1z M1569 390h1v1h-1z M1570 383h1v1h-1z M1570 397h1v1h-1z M1571 390h1v1h-1z M1572 383h1v1h-1z M1572 397h1v1h-1z M1573 390h1v1h-1z M1574 383h1v1h-1z M1574 385h1v1h-1z M1574 387h1v1h-1z M1574 389h1v1h-1z M1574 391h1v1h-1z M1574 393h1v1h-1z M1574 395h1v1h-1z M1574 397h1v1h-1z" fill="#9c9c9c"/>
<rect x="1560" y="383" width="1" height="15" fill="#2e2e2e" />
<path d="M1590 383h1v1h-1z M1590 385h1v1h-1z M1590 387h1v1h-1z M1590 389h1v1h-1z M1590 391h1v1h-1z M1590 393h1v1h-1z M1590 395h1v1h-1z M1590 397h1v1h-1z M1592 383h1v1h-1z M1592 397h1v1h-1z M1594 383h1v1h-1z M1594 397h1v1h-1z M1596 383h1v1h-1z M1596 397h1v1h-1z M1598 383h1v1h-1z M1598 397h1v1h-1z M1600 383h1v1h-1z M1600 397h1v1h-1z M1602 383h1v1h-1z M1602 397h1v1h-1z M1604 383h1v1h-1z M1604 385h1v1h-1z M1604 387h1v1h-1z M1604 389h1v1h-1z M1604 391h1v1h-1z M1604 393h1v1h-1z M1604 395h1v1h-1z M1604 397h1v1h-1z" fill="#9c9c9c"/>
<rect x="1597" y="383" width="1" height="15" fill="#2e2e2e" />
<path d="M1621 383h1v1h-1z M1621 385h1v1h-1z M1621 387h1v1h-1z M1621 389h1v1h-1z M1621 391h1v1h-1z M1621 393h1v1h-1z M1621 395h1v1h-1z M1621 397h1v1h-1z M1622 390h1v1h-1z M1623 383h1v1h-1z M1623 397h1v1h-1z M1624 390h1v1h-1z M1625 383h1v1h-1z M1625 397h1v1h-1z M1626 390h1v1h-1z M1627 383h1v1h-1z M1627 397h1v1h-1z M1628 384h1v1h-1z M1628 386h1v1h-1z M1628 388h1v1h-1z M1628 390h1v1h-1z M1628 392h1v1h-1z M1628 394h1v1h-1z M1628 396h1v1h-1z M1629 383h1v1h-1z M1629 397h1v1h-1z M1630 390h1v1h-1z M1631 383h1v1h-1z M1631 397h1v1h-1z M1632 390h1v1h-1z M1633 383h1v1h-1z M1633 397h1v1h-1z M1634 390h1v1h-1z M1635 383h1v1h-1z M1635 385h1v1h-1z M1635 387h1v1h-1z M1635 389h1v1h-1z M1635 391h1v1h-1z M1635 393h1v1h-1z M1635 395h1v1h-1z M1635 397h1v1h-1z" fill="#9c9c9c"/>
<rect x="1635" y="383" width="1" height="15" fill="#2e2e2e" />
<path d="M1651 383h1v1h-1z M1651 385h1v1h-1z M1651 387h1v1h-1z M1651 389h1v1h-1z M1651 391h1v1h-1z M1651 393h1v1h-1z M1651 395h1v1h-1z M1651 397h1v1h-1z M1652 390h1v1h-1z M1653 383h1v1h-1z M1653 397h1v1h-1z M1654 390h1v1h-1z M1655 383h1v1h-1z M1655 397h1v1h-1z M1656 390h1v1h-1z M1657 383h1v1h-1z M1657 397h1v1h-1z M1658 384h1v1h-1z M1658 386h1v1h-1z M1658 388h1v1h-1z M1658 390h1v1h-1z M1658 392h1v1h-1z M1658 394h1v1h-1z M1658 396h1v1h-1z M1659 383h1v1h-1z M1659 397h1v1h-1z M1660 390h1v1h-1z M1661 383h1v1h-1z M1661 397h1v1h-1z M1662 390h1v1h-1z M1663 383h1v1h-1z M1663 397h1v1h-1z M1664 390h1v1h-1z M1665 383h1v1h-1z M1665 385h1v1h-1z M1665 387h1v1h-1z M1665 389h1v1h-1z M1665 391h1v1h-1z M1665 393h1v1h-1z M1665 395h1v1h-1z M1665 397h1v1h-1z" fill="#9c9c9c"/>
<rect x="1651" y="383" width="15" height="1" fill="#2e2e2e" />
<path d="M1681 383h1v1h-1z M1681 385h1v1h-1z M1681 387h1v1h-1z M1681 389h1v1h-1z M1681 391h1v1h-1z M1681 393h1v1h-1z M1681 395h1v1h-1z M1681 397h1v1h-1z M1683 383h1v1h-1z M1683 397h1v1h-1z M1685 383h1v1h-1z M1685 397h1v1h-1z M1687 383h1v1h-1z M1687 397h1v1h-1z M1689 383h1v1h-1z M1689 397h1v1h-1z M1691 383h1v1h-1z M1691 397h1v1h-1z M1693 383h1v1h-1z M1693 397h1v1h-1z M1695 383h1v1h-1z M1695 385h1v1h-1z M1695 387h1v1h-1z M1695 389h1v1h-1z M1695 391h1v1h-1z M1695 393h1v1h-1z M1695 395h1v1h-1z M1695 397h1v1h-1z" fill="#9c9c9c"/>
<rect x="1681" y="390" width="15" height="1" fill="#2e2e2e" />
<path d="M1711 383h1v1h-1z M1711 385h1v1h-1z M1711 387h1v1h-1z M1711 389h1v1h-1z M1711 391h1v1h-1z M1711 393h1v1h-1z M1711 395h1v1h-1z M1711 397h1v1h-1z M1712 390h1v1h-1z M1713 383h1v1h-1z M1713 397h1v1h-1z M1714 390h1v1h-1z M1715 383h1v1h-1z M1715 397h1v1h-1z M1716 390h1v1h-1z M1717 383h1v1h-1z M1717 397h1v1h-1z M1718 384h1v1h-1z M1718 386h1v1h-1z M1718 388h1v1h-1z M1718 390h1v1h-1z M1718 392h1v1h-1z M1718 394h1v1h-1z M1718 396h1v1h-1z M1719 383h1v1h-1z M1719 397h1v1h-1z M1720 390h1v1h-1z M1721 383h1v1h-1z M1721 397h1v1h-1z M1722 390h1v1h-1z M1723 383h1v1h-1z M1723 397h1v1h-1z M1724 390h1v1h-1z M1725 383h1v1h-1z M1725 385h1v1h-1z M1725 387h1v1h-1z M1725 389h1v1h-1z M1725 391h1v1h-1z M1725 393h1v1h-1z M1725 395h1v1h-1z M1725 397h1v1h-1z" fill="#9c9c9c"/>
<rect x="1711" y="397" width="15" height="1" fill="#2e2e2e" />
<rect x="1555" y="414" width="210" height="1" fill="#dadada" />
<text x="1555" y="438.5" font-family="Liberation Sans" font-size="13.75" font-weight="700" fill="#2b2b2b" textLength="47" lengthAdjust="spacingAndGlyphs" >Отступ</text>
<rect x="1555.5" y="444.5" width="74" height="26" rx="2" fill="#fff" stroke="#cfcfcf"/>
<text x="1605.5" y="461.5" font-family="Liberation Sans" font-size="13.75" fill="#444444" text-anchor="end" >0</text>
<g transform="translate(0,0)"></g>
<path d="M1615 452.5 L1618.5 448.5 L1622 452.5" fill="none" stroke="#333333" stroke-width="1.1"/>
<path d="M1615 462.2 L1618.5 466.2 L1622 462.2" fill="none" stroke="#333333" stroke-width="1.1"/>
<text x="1555" y="503.5" font-family="Liberation Sans" font-size="13.75" font-weight="700" fill="#2b2b2b" textLength="128.7" lengthAdjust="spacingAndGlyphs" >Ориентация текста</text>
<text x="1555" y="538" font-family="Liberation Sans" font-size="13.75" fill="#444444" textLength="28" lengthAdjust="spacingAndGlyphs" >Угол</text>
<rect x="1593.5" y="520.5" width="74" height="26.5" rx="2" fill="#fff" stroke="#cfcfcf"/>
<text x="1643.5" y="538" font-family="Liberation Sans" font-size="13.75" fill="#444444" text-anchor="end" >0 °</text>
<path d="M1653 528.5 L1656.5 524.5 L1660 528.5" fill="none" stroke="#333333" stroke-width="1.1"/>
<path d="M1653 538 L1656.5 542 L1660 538" fill="none" stroke="#333333" stroke-width="1.1"/>
<text x="1555" y="581" font-family="Liberation Sans" font-size="13.75" font-weight="700" fill="#2b2b2b" textLength="91" lengthAdjust="spacingAndGlyphs" >Отображение</text>
<rect x="1555.5" y="596.5" width="16" height="16.5" rx="2" fill="#fff" stroke="#c8c8c8"/>
<path d="M1559 604.5 L1562.3 608 L1568.5 600.8" fill="none" stroke="#2e2e2e" stroke-width="1.7"/>
<text x="1582.5" y="609" font-family="Liberation Sans" font-size="13.75" fill="#444444" textLength="98.5" lengthAdjust="spacingAndGlyphs" >Перенос текста</text>
<rect x="1555.5" y="625.5" width="16" height="16.5" rx="2" fill="#f9f9f9" stroke="#e4e4e4"/>
<text x="1582.5" y="638" font-family="Liberation Sans" font-size="13.75" fill="#b9b9b9" textLength="130.5" lengthAdjust="spacingAndGlyphs" >Автоподбор ширины</text>
<rect x="1555" y="654" width="210" height="1" fill="#dadada" />
<rect x="1560" y="674.6" width="13.4" height="4.6" fill="#dcdcdc" />
<rect x="1560" y="679.6" width="5.6" height="4.6" fill="#9a9a9a" />
<g fill="none" stroke="#333333" stroke-width="1.1"><rect x="1559.6" y="669.6" width="13.8" height="14.8"/><path d="M1559.6 674.4 H1573.4 M1559.6 679.4 H1565.6"/></g>
<rect x="1566" y="676.8" width="9.4" height="9.4" fill="#ffffff" stroke="#333333" stroke-width="1.1"/>
<path d="M1568.3 679.1 L1573 681.4 L1568.3 683.6" fill="none" stroke="#333333" stroke-width="1.1"/>
<text x="1585" y="682" font-family="Liberation Sans" font-size="13.75" fill="#444444" textLength="174.5" lengthAdjust="spacingAndGlyphs" >Условное форматирование</text>
</svg>
</body></html>
